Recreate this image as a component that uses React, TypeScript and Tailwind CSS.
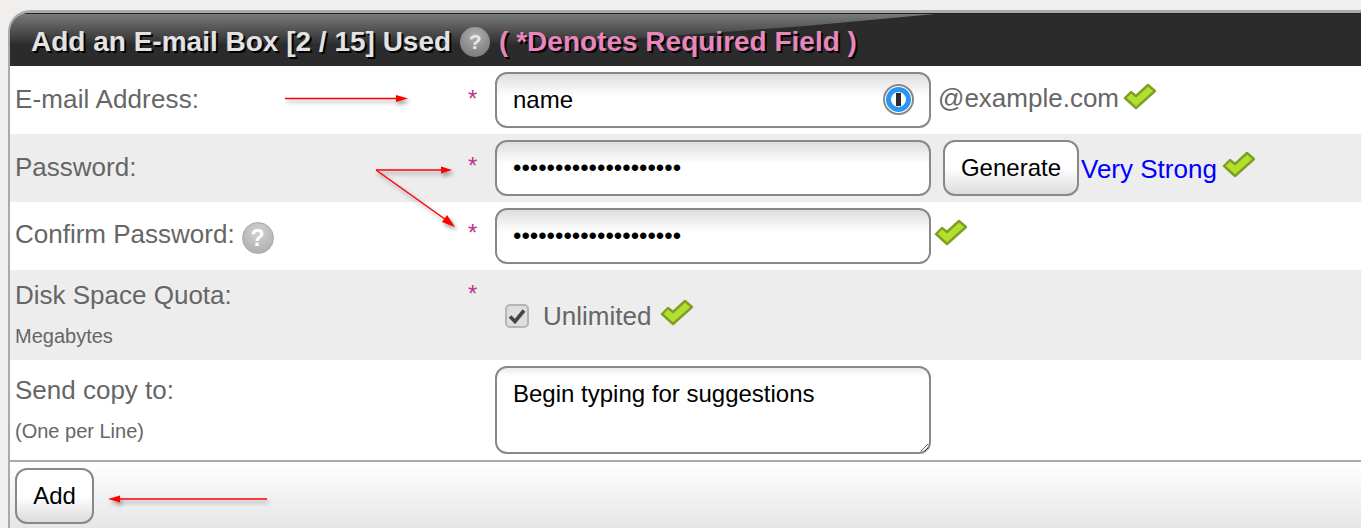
const field =
  "block w-full rounded-[12px] border-2 border-[#888] bg-[linear-gradient(#dedede,#ffffff_22px)] px-4 text-[24px] text-black outline-none";
const button =
  "h-[56px] rounded-[12px] border-2 border-[#888] bg-[linear-gradient(#ffffff_50%,#dcdcdc)] text-[24px] text-black";
const label = "text-[26px] leading-[30px] text-[#666]";
const note = "mt-[14px] text-[20px] leading-[24px] text-[#666]";

const GreenCheck = () => (
  <svg width="33" height="27" viewBox="0 0 33 27" className="shrink-0">
    <path
      d="M2 15L8 9L13 13L25 2L32 8L13 25Z"
      fill="#b2e02e"
      stroke="#7d9f22"
      strokeWidth="2.4"
      strokeLinejoin="round"
    />
  </svg>
);

const Help = ({ size, dark }: { size: string; dark?: boolean }) => (
  <span
    className={`${size} inline-flex shrink-0 items-center justify-center rounded-full font-bold [text-shadow:none] ${
      dark
        ? "bg-[radial-gradient(circle_at_50%_30%,#b0b0b0,#707070)] text-[#e8e8e8]"
        : "border border-[#aaa] bg-[radial-gradient(circle_at_50%_30%,#d2d2d2,#a8a8a8)] text-white"
    }`}
  >
    ?
  </span>
);

const Star = () => <span className="block text-[24px] leading-[28px] text-[#c0328a]">*</span>;

const Arrows = () => (
  <svg
    width="1361"
    height="528"
    className="pointer-events-none absolute left-0 top-0 drop-shadow-[2px_3px_2px_rgba(0,0,0,0.4)]"
  >
    <g stroke="#f00" strokeWidth="1.5" fill="none">
      <path d="M285 98.5H400" />
      <path d="M376 170H445" />
      <path d="M376 170L449 222" />
      <path d="M267 499H116" />
    </g>
    <g fill="#f00">
      <path d="M408 98.5L396 95V102Z" />
      <path d="M452 170L441 166.5V173.5Z" />
      <path d="M455 227L442 222L447 215Z" />
      <path d="M108 499L120 495.5V502.5Z" />
    </g>
  </svg>
);

const App = () => {
  return (
    <div className="relative h-[528px] w-[1361px] overflow-hidden bg-[#f0efee] pl-2 pt-[10px] font-['Liberation_Sans',Arial,sans-serif]">
      <div className="overflow-hidden rounded-tl-[22px] border-l-2 border-t-[3px] border-[#aaa] bg-white">
        <div className="relative flex h-[53px] items-center gap-[9px] border-t border-[#222] bg-[#2b2b2b] pl-[21px] pt-[3px] text-[28px] font-bold text-[#e3e3e3] [text-shadow:2px_2px_0_#000]">
          <div className="absolute left-0 top-0 h-[30px] w-[925px] bg-[linear-gradient(#7a7a7a,#2f2f2f)] [clip-path:polygon(0_0,100%_0,86%_40%,60%_100%,0_100%)]" />
          <span className="relative">Add an E-mail Box [2 / 15] Used</span>
          <Help size="relative h-[30px] w-[30px] text-[21px]" dark />
          <span className="relative text-[#e887bb]">( *Denotes Required Field )</span>
        </div>

        <div className="flex h-[68px] bg-white">
          <div className={`w-[458px] pl-[5px] pt-[18px] tracking-[0.14px] ${label}`}>E-mail Address:</div>
          <div className="w-[27px] pt-[19px]">
            <Star />
          </div>
          <div className="relative mt-[6px] w-[436px]">
            <input readOnly defaultValue="name" className={`${field} h-[56px]`} />
            <span className="absolute left-[388px] top-[12px] flex h-[31px] w-[31px] items-center justify-center rounded-full border-2 border-[#888] bg-white">
              <span className="flex h-[25px] w-[25px] items-center justify-center rounded-full border-[5px] border-[#2b95f5] bg-white">
                <span className="h-[13px] w-[5px] bg-[#2b2b2b]" />
              </span>
            </span>
          </div>
          <div className="ml-[7px] flex items-start pt-[17px] text-[26px] leading-[30px] text-[#666]">@example.com</div>
          <div className="ml-[4px] pt-[17px]">
            <GreenCheck />
          </div>
        </div>

        <div className="flex h-[68px] bg-[#ededed]">
          <div className={`w-[458px] pl-[5px] pt-[18px] ${label}`}>Password:</div>
          <div className="w-[27px] pt-[18px]">
            <Star />
          </div>
          <div className="mt-[6px] w-[436px]">
            <input readOnly type="password" defaultValue="aaaaaaaaaaaaaaaaaaaa" className={`${field} h-[56px]`} />
          </div>
          <button className={`${button} ml-3 mt-[6px] w-[136px]`}>Generate</button>
          <div className="ml-[2px] pt-[20px] text-[26px] leading-[30px] text-[#0000ff]">Very Strong</div>
          <div className="ml-[5px] pt-[17px]">
            <GreenCheck />
          </div>
        </div>

        <div className="flex h-[68px] bg-white">
          <div className={`flex w-[458px] gap-[7px] pl-[5px] pt-[17px] ${label}`}>
            Confirm Password:
            <Help size="mt-[3px] h-[32px] w-[32px] text-[23px]" />
          </div>
          <div className="w-[27px] pt-[17px]">
            <Star />
          </div>
          <div className="mt-[6px] w-[436px]">
            <input readOnly type="password" defaultValue="aaaaaaaaaaaaaaaaaaaa" className={`${field} h-[56px]`} />
          </div>
          <div className="ml-[3px] pt-[17px]">
            <GreenCheck />
          </div>
        </div>

        <div className="flex h-[90px] bg-[#ededed]">
          <div className="w-[458px] pl-[5px] pt-[10px]">
            <div className={label}>Disk Space Quota:</div>
            <div className={note}>Megabytes</div>
          </div>
          <div className="w-[27px] pt-[10px]">
            <Star />
          </div>
          <div className="flex items-start pl-[10px] pt-[34px]">
            <span className="flex h-[24px] w-[24px] items-center justify-center rounded-[5px] border-2 border-[#b5b5b5] bg-[#dedede]">
              <svg width="18" height="16" viewBox="0 0 18 16">
                <path d="M2 8.5L7 13.5L16 2.5" fill="none" stroke="#444" strokeWidth="3.6" />
              </svg>
            </span>
            <span className={`ml-[14px] mt-[-3px] ${label}`}>Unlimited</span>
            <span className="ml-[9px] mt-[-5px]">
              <GreenCheck />
            </span>
          </div>
        </div>

        <div className="flex h-[100px] bg-white">
          <div className="w-[458px] pl-[5px] pt-[15px]">
            <div className={label}>Send copy to:</div>
            <div className={note}>(One per Line)</div>
          </div>
          <div className="w-[27px]" />
          <div className="mt-[6px] w-[436px]">
            <textarea
              readOnly
              defaultValue="Begin typing for suggestions"
              className="block h-[88px] w-full rounded-[12px] border-2 border-[#888] bg-[linear-gradient(#ececec,#ffffff_8px)] px-4 pt-3 text-[24px] leading-[28px] text-black outline-none"
            />
          </div>
        </div>

        <div className="h-[68px] border-t-2 border-[#aaa] bg-[linear-gradient(#ffffff,#e6e6e6)] pl-[5px] pt-[6px]">
          <button className={`${button} w-[79px]`}>Add</button>
        </div>
      </div>
      <Arrows />
    </div>
  );
};

export default App;
